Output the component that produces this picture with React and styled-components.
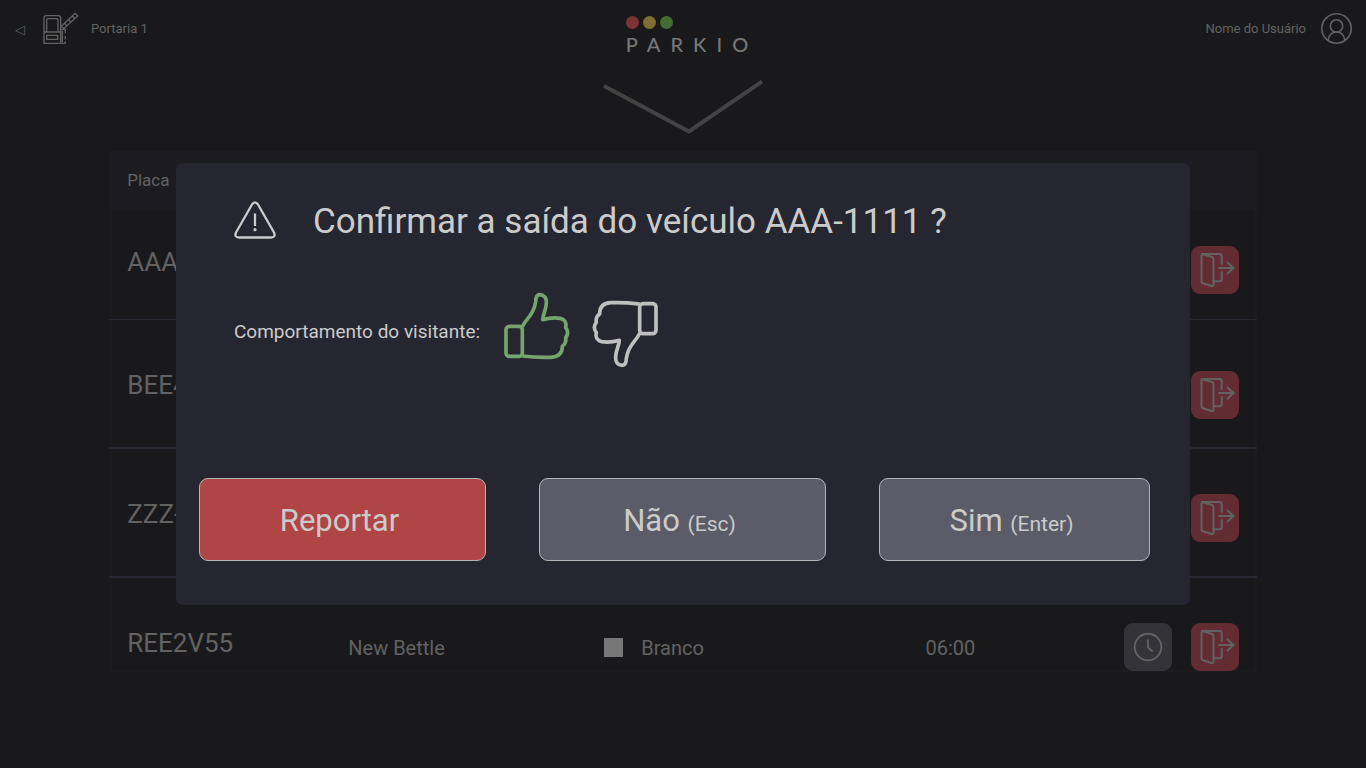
import React from "react";
import styled, { createGlobalStyle } from "styled-components";

const GlobalStyle = createGlobalStyle`
  * { box-sizing: border-box; }
  body {
    margin: 0;
    background: #19191b;
    color: #626262;
    font-family: Roboto, "Liberation Sans", sans-serif;
  }
  button { font-family: inherit; cursor: pointer; }
  svg { display: block; }
`;

const Page = styled.div`
  min-height: 100vh;
`;

const TopBar = styled.header`
  display: grid;
  grid-template-columns: 1fr auto 1fr;
  align-items: start;
  padding: 12px 14px 0;
  font-size: 13px;
  line-height: 33px;
`;

const Gate = styled.nav`
  display: flex;
  align-items: center;
  height: 33px;
`;

const BackLink = styled.a`
  width: 29px;
  color: inherit;
  text-decoration: none;
  font-family: "DejaVu Sans", sans-serif;
  padding: 2px 0 0 1px;
`;

const GateName = styled.span`
  margin-left: 12px;
`;

const User = styled.div`
  display: flex;
  justify-content: flex-end;
  gap: 15px;
`;

const Logo = styled.div`
  padding: 4px 0 0 8px;
`;

const Lights = styled.div`
  display: flex;
  gap: 4px;
`;

const Light = styled.span`
  width: 13px;
  height: 13px;
  border-radius: 50%;
  background: ${(p) => p.$color};
`;

const Wordmark = styled.div`
  margin-top: 2px;
  color: #777778;
  font-family: Lato, sans-serif;
  font-size: 20px;
  font-weight: 500;
  line-height: 26px;
  letter-spacing: 10px;
  margin-right: -10px;
`;

const Chevron = styled.svg`
  margin: 23px auto 17px;
`;

const Panel = styled.main`
  margin: 0 8%;
  max-height: 68vh;
  overflow: hidden;
  box-shadow: inset 0 0 0 3px #1b1b1e;
`;

const VehicleTable = styled.table`
  width: 100%;
  table-layout: fixed;
  border-collapse: separate;
  border-spacing: 0;
`;

const HeadCell = styled.th`
  width: ${(p) => p.$width};
  height: 59px;
  padding: 0 0 2px 18px;
  background: #1c1c20;
  font-size: 17px;
  font-weight: 400;
  text-align: left;
`;

const Row = styled.tr`
  height: ${(p) => (p.$first ? "110px" : "129px")};
  td { border-bottom: ${(p) => (p.$first ? "1px" : "2px")} solid #282833; }
`;

const PlateCell = styled.td`
  padding: ${(p) => (p.$first ? "0 0 6px 18px" : "2px 0 0 18px")};
  font-size: 26px;
`;

const DetailCell = styled.td`
  padding: 12px 0 0;
  font-size: 20px;
`;

const Colour = styled.div`
  display: flex;
  align-items: center;
  gap: 18px;
`;

const Swatch = styled.span`
  width: 19px;
  height: 19px;
  background: #777777;
`;

const ActionCell = styled.td`
  padding: ${(p) => (p.$low ? "22px" : "10px")} 18px 0 0;
`;

const Actions = styled.div`
  display: flex;
  justify-content: flex-end;
  gap: 19px;
`;

const IconButton = styled.button`
  width: 48px;
  height: 48px;
  padding: 0;
  border: 0;
  border-radius: 9px;
  background: ${(p) => (p.$exit ? "#632c33" : "#343438")};
  color: #626262;
`;

const Overlay = styled.div`
  position: fixed;
  inset: 0;
  display: grid;
  align-items: center;
  padding: 0 176px;
`;

const Modal = styled.section`
  padding: 36px 40px 44px 23px;
  border-radius: 7px;
  background: #262631;
  color: #cbcbcb;
`;

const ModalHead = styled.div`
  display: flex;
  align-items: center;
  gap: 37px;
  height: 44px;
  padding-left: 35px;
`;

const Title = styled.h1`
  margin: 0;
  padding-top: 2px;
  font-size: 35px;
  line-height: 42px;
  font-weight: 400;
`;

const Behaviour = styled.div`
  display: flex;
  align-items: center;
  gap: 23px;
  margin-top: 48px;
  padding-left: 35px;
  font-size: 19px;
`;

const BehaviourLabel = styled.span`
  padding-top: 2px;
`;

const Thumbs = styled.div`
  display: flex;
  gap: 22px;
  height: 78px;
`;

const ThumbButton = styled.button`
  align-self: ${(p) => (p.$down ? "flex-end" : "flex-start")};
  padding: 0;
  border: 0;
  background: none;
  color: ${(p) => (p.$down ? "#bfbfbf" : "#74a56d")};
  svg { transform: ${(p) => (p.$down ? "rotate(180deg)" : "none")}; }
`;

const Choices = styled.div`
  display: grid;
  grid-template-columns: 287fr 287fr 271fr;
  gap: 53px;
  margin-top: 109px;
`;

const ChoiceButton = styled.button`
  height: 83px;
  padding: 2px 6px 0 0;
  border: 1px solid #b5b5b8;
  border-radius: 9px;
  background: ${(p) => (p.$danger ? "#af4545" : "#5c5c68")};
  color: #cbcbcb;
  font-size: 31px;
  small { font-size: 21px; }
`;

const GateIcon = () => (
  <svg width="36" height="33" viewBox="0 0 108 99" fill="none" stroke="currentColor" strokeWidth="4">
    <path d="M3 94V18q0-7 7-7h36q7 0 7 7v76zM3 60h50M11 58V24q0-4 4-4h26q4 0 4 4v34M11 70h33v12H11zM53 94h15M55 52h12v12M58 56v34M67 72v10M67 88v6" />
    <path d="M55 43 96 4l8 8-42 38zM66 34l5 8M78 23l5 8M89 12l5 8" />
  </svg>
);

const UserIcon = () => (
  <svg width="31" height="32" viewBox="0 0 31 32" fill="none" stroke="currentColor" strokeWidth="1.6">
    <circle cx="15.5" cy="16.5" r="14.7" />
    <circle cx="15.5" cy="14" r="6.2" />
    <path d="M7 28.5C8 22.500 11.500 20 15.500 20s7.500 2.500 8.500 8.500" />
  </svg>
);

const ExitIcon = () => (
  <svg width="48" height="48" viewBox="0 0 48 48" fill="none" stroke="currentColor" strokeWidth="2" strokeLinejoin="round" strokeLinecap="round">
    <path d="M11 8 21 11q1.500.5 1.500 2v25.500q0 2-2 1.500L11.300 37Q10.500 36.500 10.500 35V9q0-1 .5-1zM11 8h17.500q2.200 0 2.200 2.200V18M30.700 26v7.300q0 2-2 2H23" />
    <path d="M28 22h15M36.500 16.500l6 5.500-6 5.500" />
  </svg>
);

const ClockIcon = () => (
  <svg width="48" height="48" viewBox="0 0 48 48" fill="none" stroke="currentColor" strokeWidth="1.9">
    <circle cx="24" cy="24" r="13.300" />
    <path d="M24 16.500v8l4.700 4" />
  </svg>
);

const WarningIcon = () => (
  <svg width="42" height="40" viewBox="0 0 42 40" fill="none" stroke="currentColor" strokeWidth="2.3">
    <path d="M18 3.500q3-4.200 6 0l16 28q2 5-3 5H5q-5 0-3-5z" strokeLinejoin="round" />
    <path d="M21 12.500v12.500" />
    <circle cx="21" cy="28.700" r="1.600" fill="currentColor" stroke="none" />
  </svg>
);

const ThumbIcon = () => (
  <svg width="67" height="70" viewBox="0 0 201 210" fill="none" stroke="currentColor" strokeWidth="11" strokeLinejoin="round">
    <rect x="9" y="106" width="49" height="90" rx="10" />
    <path d="M58 108C66 84 92 76 98 32C98 18 102 11 111 11C124 12 131 22 130 36C130 56 120 68 119 86C140 80 160 80 172 82C186 85 191 96 188 109C196 120 196 130 188 140C190 152 186 160 178 166C178 186 168 198 144 199C116 200 90 199 58 195" />
  </svg>
);

const vehicles = [
  { plate: "AAA-1111" },
  { plate: "BEE4", low: true },
  { plate: "ZZZ-" },
  { plate: "REE2V55", model: "New Bettle", colour: "Branco", time: "06:00", waiting: true },
];

export default function App() {
  return (
    <>
      <GlobalStyle />
      <Page>
        <TopBar>
          <Gate>
            <BackLink href="#" aria-label="Voltar">◁</BackLink>
            <GateIcon />
            <GateName>Portaria 1</GateName>
          </Gate>
          <Logo>
            <Lights>
              <Light $color="#7d3234" />
              <Light $color="#806d33" />
              <Light $color="#416d32" />
            </Lights>
            <Wordmark>PARKIO</Wordmark>
          </Logo>
          <User>
            <span>Nome do Usuário</span>
            <UserIcon />
          </User>
        </TopBar>
        <Chevron width="160" height="54" viewBox="0 0 160 54" fill="none" stroke="#434344" strokeWidth="4">
          <path d="M1 6 86 51.500 159 1.500" />
        </Chevron>
        <Panel>
          <VehicleTable>
            <thead>
              <tr>
                <HeadCell $width="239px">Placa</HeadCell>
                <HeadCell $width="256px" />
                <HeadCell $width="28%" />
                <HeadCell />
                <HeadCell $width="140px" />
              </tr>
            </thead>
            <tbody>
              {vehicles.map((v, i) => (
                <Row key={v.plate} $first={i === 0}>
                  <PlateCell $first={i === 0}>{v.plate}</PlateCell>
                  <DetailCell>{v.model}</DetailCell>
                  <DetailCell>
                    {v.colour && (
                      <Colour>
                        <Swatch />
                        {v.colour}
                      </Colour>
                    )}
                  </DetailCell>
                  <DetailCell>{v.time}</DetailCell>
                  <ActionCell $low={v.low}>
                    <Actions>
                      {v.waiting && (
                        <IconButton aria-label="Horário">
                          <ClockIcon />
                        </IconButton>
                      )}
                      <IconButton $exit aria-label="Saída">
                        <ExitIcon />
                      </IconButton>
                    </Actions>
                  </ActionCell>
                </Row>
              ))}
            </tbody>
          </VehicleTable>
        </Panel>
      </Page>
      <Overlay>
        <Modal role="dialog" aria-modal="true" aria-labelledby="confirm-title">
          <ModalHead>
            <WarningIcon />
            <Title id="confirm-title">Confirmar a saída do veículo AAA-1111 ?</Title>
          </ModalHead>
          <Behaviour>
            <BehaviourLabel>Comportamento do visitante:</BehaviourLabel>
            <Thumbs>
              <ThumbButton aria-label="Bom">
                <ThumbIcon />
              </ThumbButton>
              <ThumbButton $down aria-label="Ruim">
                <ThumbIcon />
              </ThumbButton>
            </Thumbs>
          </Behaviour>
          <Choices>
            <ChoiceButton $danger>Reportar</ChoiceButton>
            <ChoiceButton>
              Não <small>(Esc)</small>
            </ChoiceButton>
            <ChoiceButton>
              Sim <small>(Enter)</small>
            </ChoiceButton>
          </Choices>
        </Modal>
      </Overlay>
    </>
  );
}
